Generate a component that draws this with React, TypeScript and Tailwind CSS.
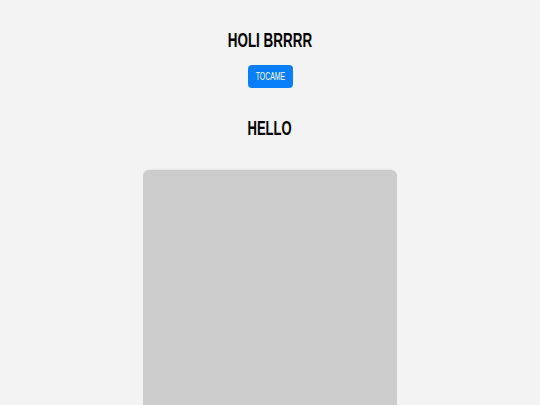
export default function App() {
  return (
    <div className="min-h-screen bg-[#f3f3f3] flex flex-col items-center pt-[26px] overflow-hidden" style={{ fontFamily: '"Liberation Sans", Arial, sans-serif' }}>
      <h1 className="text-[21px] leading-7 font-bold text-black">
        <span className="inline-block scale-x-[0.64]">HOLI BRRRR</span>
      </h1>
      <button className="mt-[11px] w-[45px] h-[23px] rounded bg-[#087ef8] text-white text-[11px] flex items-center justify-center">
        <span className="inline-block scale-x-[0.63] whitespace-nowrap">TOCAME</span>
      </button>
      <h2 className="mt-[26px] text-[21px] leading-7 font-bold text-black">
        <span className="inline-block scale-x-[0.62]">HELLO</span>
      </h2>
      <div className="mt-[28px] w-[254px] h-[260px] shrink-0 rounded-md bg-[#cccccc] shadow-[0_-1px_1px_rgba(0,0,0,0.04)]" />
    </div>
  );
}
